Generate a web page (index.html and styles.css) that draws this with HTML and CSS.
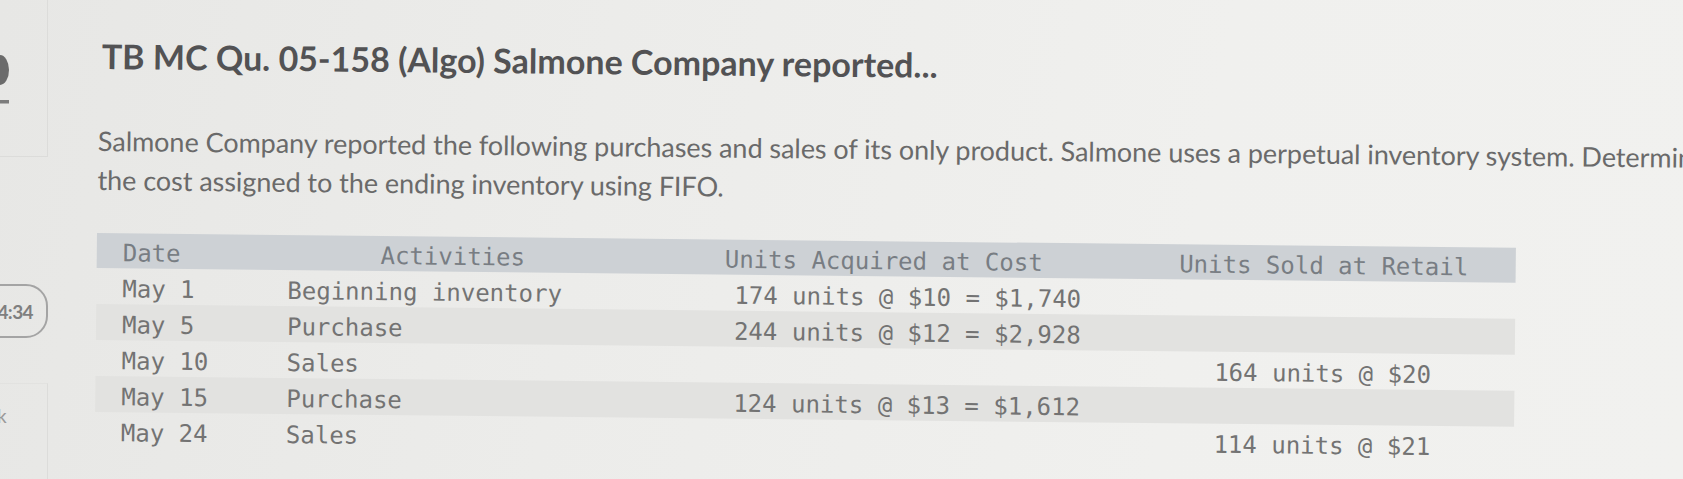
FILE: index.html
```html
<!DOCTYPE html>
<html lang="en">
<head>
<meta charset="utf-8">
<title>TB MC Qu. 05-158 (Algo) Salmone Company reported...</title>
<link rel="stylesheet" href="styles.css">
</head>
<body>
<aside class="sidebar">
  <div class="side-top">
    <svg class="help-icon" width="12" height="52" viewBox="0 0 12 52" aria-hidden="true">
      <path d="M0 0 A 9 15 0 0 1 0 30 Z" fill="#6b6b6b"/>
      <rect x="0" y="45" width="9" height="3.5" fill="#7c7c7c"/>
    </svg>
  </div>
  <div class="timer">4:34</div>
  <div class="side-bottom"><span class="side-k">k</span></div>
</aside>
<main class="main">
  <h1 class="title">TB MC Qu. 05-158 (Algo) Salmone Company reported...</h1>
  <p class="question">Salmone Company reported the following purchases and sales of its only product. Salmone uses a perpetual inventory system. Determine<br>the cost assigned to the ending inventory using FIFO.</p>
  <div class="table">
    <div class="row head">
      <div class="c1">Date</div>
      <div class="c2 center">Activities</div>
      <div class="c3 center">Units Acquired at Cost</div>
      <div class="c4 center">Units Sold at Retail</div>
    </div>
    <div class="row">
      <div class="c1">May 1</div>
      <div class="c2">Beginning inventory</div>
      <div class="c3 cost">174 units @ $10 = $1,740</div>
      <div class="c4 center"></div>
    </div>
    <div class="row shade">
      <div class="c1">May 5</div>
      <div class="c2">Purchase</div>
      <div class="c3 cost">244 units @ $12 = $2,928</div>
      <div class="c4 center"></div>
    </div>
    <div class="row">
      <div class="c1">May 10</div>
      <div class="c2">Sales</div>
      <div class="c3 cost"></div>
      <div class="c4 center">164 units @ $20</div>
    </div>
    <div class="row shade">
      <div class="c1">May 15</div>
      <div class="c2">Purchase</div>
      <div class="c3 cost">124 units @ $13 = $1,612</div>
      <div class="c4 center"></div>
    </div>
    <div class="row">
      <div class="c1">May 24</div>
      <div class="c2">Sales</div>
      <div class="c3 cost"></div>
      <div class="c4 center">114 units @ $21</div>
    </div>
  </div>
</main>
</body>
</html>
```
FILE: styles.css
```css
html, body {
  margin: 0;
  padding: 0;
}
body {
  width: 1683px;
  height: 479px;
  overflow: hidden;
  display: flex;
  background: linear-gradient(100deg, #e7e7e5 0%, #ececea 35%, #f0f0ee 70%, #f1f1ef 100%);
  font-family: "Lato", "Open Sans", sans-serif;
}
.sidebar {
  width: 48px;
  flex: none;
  display: flex;
  flex-direction: column;
}
.side-top {
  height: 157px;
  box-sizing: border-box;
  border-right: 1px solid #dcdcda;
  border-bottom: 1px solid #dcdcda;
  padding-top: 55px;
}
.help-icon {
  display: block;
}
.timer {
  margin-top: 127px;
  margin-left: -22px;
  width: 70px;
  height: 54px;
  box-sizing: border-box;
  border: 2px solid #a4a4a4;
  border-radius: 22px;
  display: flex;
  align-items: center;
  justify-content: flex-end;
  padding-right: 13px;
  font-family: "Lato", sans-serif;
  font-weight: 700;
  font-size: 19px;
  color: #7f7f7f;
  letter-spacing: -0.6px;
}
.side-bottom {
  margin-top: 45px;
  flex: 1;
  border-top: 1px solid #e2e2e0;
  border-right: 1px solid #dcdcda;
  padding-top: 20px;
}
.side-k {
  display: block;
  margin-left: -3px;
  font-size: 19px;
  line-height: 24px;
  color: #9a9a9a;
}
.main {
  flex: 1;
  padding-left: 49px;
  transform: rotate(0.6deg);
  transform-origin: 49px 233px;
}
.title {
  margin: 0;
  padding-top: 36px;
  padding-left: 3px;
  font-size: 34px;
  line-height: 40px;
  font-weight: 700;
  color: #525254;
  white-space: nowrap;
}
.question {
  margin: 45px 0 0 0;
  font-size: 27px;
  line-height: 39px;
  font-weight: 400;
  letter-spacing: -0.05px;
  color: #6a6a6a;
  white-space: nowrap;
}
.table {
  margin-top: 34px;
  width: 1419px;
  font-family: "DejaVu Sans Mono", "Liberation Mono", monospace;
  font-size: 24px;
  color: #737373;
}
.row {
  display: grid;
  grid-template-columns: 173px 366px 496px 384px;
  height: 36px;
  box-sizing: border-box;
  padding-top: 8px;
  line-height: 27px;
  white-space: nowrap;
}
.row.head {
  height: 35px;
  padding-top: 6px;
  line-height: 29px;
  background: #cdd1d5;
  color: #787d83;
}
.row.shade {
  background: #e2e2e0;
}
.c1 {
  padding-left: 26px;
}
.c2 {
  padding-left: 18px;
}
.c2.center {
  padding-left: 0;
}
.cost {
  padding-left: 99px;
}
.center {
  text-align: center;
}
```
